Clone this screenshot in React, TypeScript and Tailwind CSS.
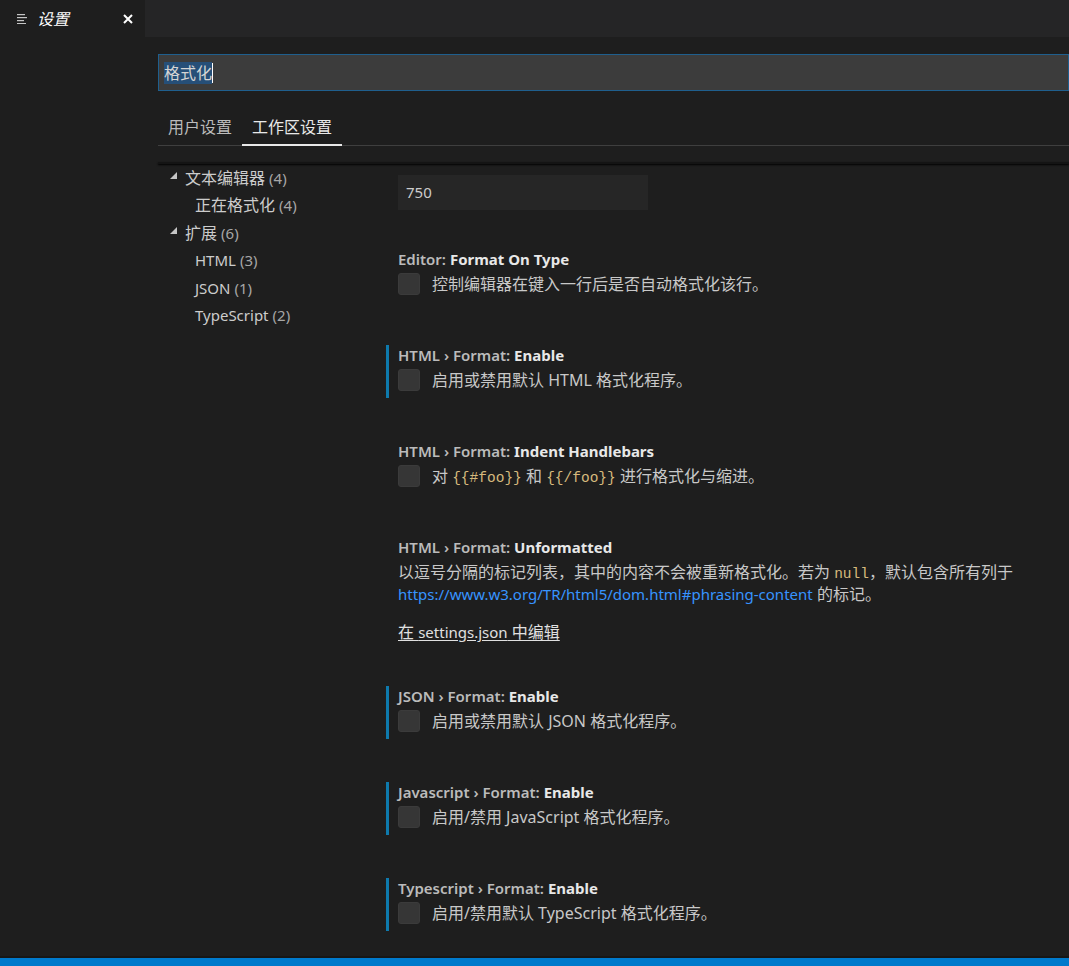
import React from "react";

const FONT = '"Segoe UI", "Noto Sans", "Noto Sans CJK SC", sans-serif';
const MONO = '"Liberation Mono", "DejaVu Sans Mono", monospace';

function Twistie() {
  return (
    <svg width="7" height="7" viewBox="0 0 7 7" className="shrink-0">
      <polygon points="0,7 7,7 7,0" fill="#c5c5c5" />
    </svg>
  );
}

function Code({ children }: { children: React.ReactNode }) {
  return (
    <span className="text-[14.5px] leading-none text-[#d7ba7d]" style={{ fontFamily: MONO }}>
      {children}
    </span>
  );
}

function Checkbox() {
  return <div className="w-[22px] h-[22px] shrink-0 rounded-[3px] bg-[#363636] border border-[#3b3b3b]" />;
}

function Title({ prefix, label }: { prefix: string; label: string }) {
  return (
    <div className="h-[20px] leading-[20px] text-[15px] whitespace-nowrap">
      <span className="font-semibold text-[#bbbbbb]">{prefix}</span>
      <span className="font-bold text-[#e8e8e8]">{label}</span>
    </div>
  );
}

function BoolSetting({
  prefix,
  label,
  modified,
  children,
}: {
  prefix: string;
  label: string;
  modified?: boolean;
  children: React.ReactNode;
}) {
  return (
    <div
      className={
        "shrink-0 pl-[9px] pb-[7px] mb-[43px] border-l-[3px] " + (modified ? "border-[#0e7aad]" : "border-transparent")
      }
    >
      <Title prefix={prefix} label={label} />
      <div className="mt-[4px] flex items-center gap-[12px]">
        <Checkbox />
        <div className="leading-[22px] text-[16px] text-[#c8c8c8] whitespace-nowrap">{children}</div>
      </div>
    </div>
  );
}

const toc = [
  { label: "文本编辑器", count: 4, level: 0, cjk: true },
  { label: "正在格式化", count: 4, level: 1, cjk: true },
  { label: "扩展", count: 6, level: 0, cjk: true },
  { label: "HTML", count: 3, level: 1, cjk: false },
  { label: "JSON", count: 1, level: 1, cjk: false },
  { label: "TypeScript", count: 2, level: 1, cjk: false },
];

export default function App() {
  return (
    <div className="w-[1069px] h-[966px] flex flex-col bg-[#1e1e1e] overflow-hidden" style={{ fontFamily: FONT }}>
      {/* tab bar */}
      <div className="h-[37px] shrink-0 flex bg-[#252526]">
        <div className="w-[145px] bg-[#1e1e1e] flex items-center pl-[17px] pr-[12px]">
          <svg width="11" height="11" viewBox="0 0 11 11" className="shrink-0">
            <rect x="0" y="1" width="8" height="1.2" fill="#c5c5c5" />
            <rect x="0" y="4" width="10" height="1.2" fill="#c5c5c5" />
            <rect x="0" y="7" width="7" height="1.2" fill="#c5c5c5" />
            <rect x="0" y="10" width="9" height="1.2" fill="#c5c5c5" />
          </svg>
          <span className="ml-[9px] text-[16px] italic text-white">设置</span>
          <svg width="10" height="10" viewBox="0 0 10 10" className="ml-auto">
            <path d="M1 1 L9 9 M9 1 L1 9" stroke="#ffffff" strokeWidth="2" />
          </svg>
        </div>
        <div className="flex-1" />
      </div>

      {/* editor */}
      <div className="flex-1 flex flex-col pl-[158px] min-h-0">
        <div className="shrink-0 mt-[17px] h-[37px] border border-[#1f5f8e] bg-[#3c3c3c] flex items-center pl-[5px]">
          <span className="text-[16px] text-[#d4d4d4] bg-[#264f78] leading-[22px]">格式化</span>
          <span className="w-[1px] h-[20px] bg-white" />
        </div>

        <div className="shrink-0 mt-[15px] flex border-b border-[#3f3f3f] h-[40px] items-end">
          <div className="px-[10px] pb-[5px] text-[16px] text-[#bbbbbb] border-b-2 border-transparent -mb-[1px]">
            用户设置
          </div>
          <div className="px-[10px] pb-[5px] text-[16px] text-[#e8e8e8] border-b-2 border-[#e8e8e8] -mb-[1px]">
            工作区设置
          </div>
        </div>
        <div className="shrink-0 mt-[16px] h-[2px] bg-[#141414] shadow-[0_1px_2px_#000]" />

        <div className="flex flex-1 min-h-0">
          {/* toc */}
          <div className="w-[228px] shrink-0">
            {toc.map((t) => (
              <div
                key={t.label}
                className={"h-[27.5px] flex items-center " + (t.level === 0 ? "pl-[12px]" : "pl-[37px]")}
              >
                {t.level === 0 && (
                  <span className="mr-[8px] mt-[-4px]">
                    <Twistie />
                  </span>
                )}
                <span className={"text-[#cccccc] " + (t.cjk ? "text-[16px]" : "text-[15px]")}>{t.label}</span>
                <span className="ml-[4px] text-[15px] text-[#a6a6a6]">({t.count})</span>
              </div>
            ))}
          </div>

          {/* settings list */}
          <div className="flex-1 flex flex-col">
            <div className="shrink-0 ml-[12px] mt-[11px] mb-[39px] w-[250px] h-[35px] bg-[#262626] flex items-center px-[8px] text-[15px] text-[#cccccc]">
              750
            </div>

            <BoolSetting prefix="Editor: " label="Format On Type">
              控制编辑器在键入一行后是否自动格式化该行。
            </BoolSetting>

            <BoolSetting prefix="HTML › Format: " label="Enable" modified>
              启用或禁用默认 HTML 格式化程序。
            </BoolSetting>

            <BoolSetting prefix="HTML › Format: " label="Indent Handlebars">
              对 <Code>{"{{#foo}}"}</Code> 和 <Code>{"{{/foo}}"}</Code> 进行格式化与缩进。
            </BoolSetting>

            <div className="shrink-0 pl-[9px] mb-[43px] border-l-[3px] border-transparent">
              <Title prefix="HTML › Format: " label="Unformatted" />
              <div className="mt-[4px] text-[16px] text-[#c8c8c8]">
                <div className="h-[22px] leading-[22px] whitespace-nowrap">
                  以逗号分隔的标记列表，其中的内容不会被重新格式化。若为 <Code>null</Code>，默认包含所有列于
                </div>
                <div className="h-[22px] leading-[22px] whitespace-nowrap">
                  <span className="text-[15px] leading-none text-[#3794ff]">
                    https://www.w3.org/TR/html5/dom.html#phrasing-content
                  </span>{" "}
                  的标记。
                </div>
              </div>
              <div className="mt-[16px] h-[22px] leading-[22px] text-[16px] text-[#e0e0e0] underline underline-offset-2">
                在 <span className="text-[15px] leading-none">settings.json</span> 中编辑
              </div>
            </div>

            <BoolSetting prefix="JSON › Format: " label="Enable" modified>
              启用或禁用默认 JSON 格式化程序。
            </BoolSetting>

            <BoolSetting prefix="Javascript › Format: " label="Enable" modified>
              启用/禁用 JavaScript 格式化程序。
            </BoolSetting>

            <BoolSetting prefix="Typescript › Format: " label="Enable" modified>
              启用/禁用默认 TypeScript 格式化程序。
            </BoolSetting>
          </div>
        </div>
      </div>

      {/* status bar */}
      <div className="h-[2px] shrink-0 bg-[#171717]" />
      <div className="h-[8px] shrink-0 bg-[#007acc]" />
    </div>
  );
}
